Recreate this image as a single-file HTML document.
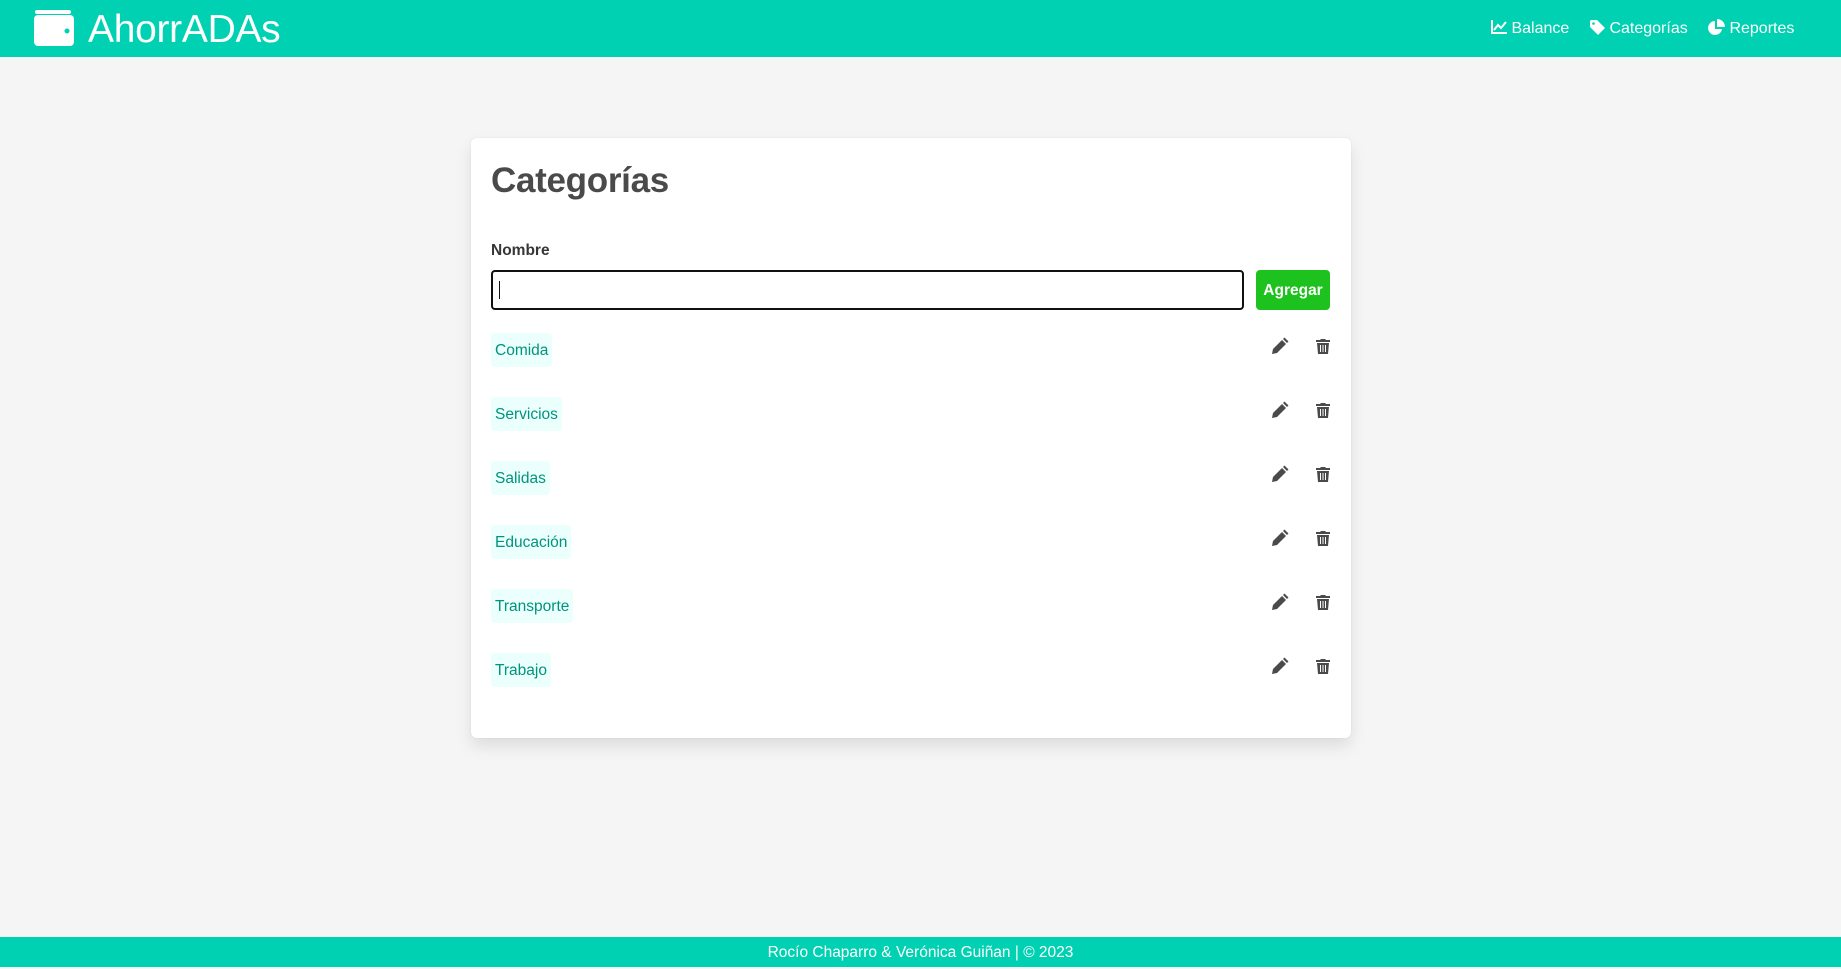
<!DOCTYPE html>
<html><head><meta charset="utf-8"><style>
*{box-sizing:border-box;margin:0;padding:0}
body{width:1841px;height:967px;background:#f5f5f5;font-family:"Liberation Sans",sans-serif;position:relative;overflow:hidden;color:#4a4a4a}
.nav{position:absolute;top:0;left:0;width:1841px;height:57px;background:#00d1b2;color:#fff}
.logo{position:absolute;left:88px;top:6px;font-size:39px;line-height:48px;letter-spacing:-0.3px}
.nav a{position:absolute;top:19px;font-size:16px;color:#fff;text-decoration:none;line-height:20px}
.card{position:absolute;left:471px;top:138px;width:880px;height:600px;background:#fff;border-radius:6px;box-shadow:0 8px 16px rgba(10,10,10,.1),0 0 0 1px rgba(10,10,10,.02)}
h1{position:absolute;left:20px;top:23px;font-size:35px;font-weight:bold;color:#4a4a4a;letter-spacing:-0.3px}
.lbl{position:absolute;left:20px;top:104px;font-size:15.5px;font-weight:bold;color:#363636}
.inp{position:absolute;left:20px;top:132px;width:753px;height:40px;border:2px solid #111;border-radius:4px}
.inp:after{content:"";position:absolute;left:6px;top:9px;width:1px;height:18px;background:#111}
.btn{position:absolute;left:785px;top:132px;width:74px;height:40px;background:#1ec21e;border-radius:4px;color:#fff;font-weight:bold;font-size:15.5px;text-align:center;line-height:41px}
.tag{position:absolute;left:20px;height:34px;line-height:36px;padding:0 4px;background:#ebfffc;color:#00947e;font-size:15.5px;border-radius:4px}
.foot{position:absolute;left:0;top:937px;width:1841px;height:30px;background:#00d1b2;color:#fff;text-align:center;font-size:15.5px;line-height:32px}
</style></head><body>
<div class="nav">
<svg style="position:absolute;left:34px;top:10px" width="40" height="36" viewBox="0 0 40 36"><rect x="1" y="0" width="36" height="4" rx="2" fill="#fff"/><rect x="0" y="5" width="40" height="31" rx="4" fill="#fff"/><circle cx="33" cy="21" r="2.5" fill="#00d1b2"/></svg>
<div class="logo">AhorrADAs</div>
<a style="left:1491px"><svg width="16" height="14" viewBox="0 0 16 14" style="vertical-align:-1px"><path d="M1 0v13h15" stroke="#fff" stroke-width="2" fill="none"/><path d="M3 10l4-5 3 3 5-6" stroke="#fff" stroke-width="2" fill="none"/></svg> Balance</a>
<a style="left:1590px"><svg width="15" height="15" viewBox="0 0 15 15" style="vertical-align:-2px"><path d="M0 1v6l8 8 7-7-8-8H1z" fill="#fff"/><circle cx="3.5" cy="3.5" r="1.3" fill="#00d1b2"/></svg> Categorías</a>
<a style="left:1708px"><svg width="17" height="17" viewBox="0 0 17 17" style="vertical-align:-3px"><path d="M7 2a7 7 0 1 0 7 8H7z" fill="#fff"/><path d="M9 0v8h8A8 8 0 0 0 9 0z" fill="#fff"/></svg> Reportes</a>
</div>
<div class="card">
<h1>Categorías</h1>
<div class="lbl">Nombre</div>
<div class="inp"></div>
<div class="btn">Agregar</div>
</div>
<div class="foot">Rocío Chaparro &amp; Verónica Guiñan | © 2023</div>
<div style="position:absolute;left:0;top:0">
<div class="tag" style="left:491px;top:333px">Comida</div>
<div class="tag" style="left:491px;top:397px">Servicios</div>
<div class="tag" style="left:491px;top:461px">Salidas</div>
<div class="tag" style="left:491px;top:525px">Educación</div>
<div class="tag" style="left:491px;top:589px">Transporte</div>
<div class="tag" style="left:491px;top:653px">Trabajo</div>
</div>
<svg style="position:absolute;left:0;top:0" width="1841" height="967">
<defs>
<g id="p"><path d="M0 16l1-5 9-9 4 4-9 9z" fill="#4a4a4a"/><path d="M11 1l1.5-1.5 4 4L15 5z" fill="#4a4a4a"/></g>
<g id="t"><rect x="0" y="1" width="14" height="2" fill="#4a4a4a"/><rect x="4.5" y="0" width="5" height="2" fill="#4a4a4a"/><path d="M1 4h12l-1 11H2z" fill="#4a4a4a"/><path d="M4.5 6v7M7 6v7M9.5 6v7" stroke="#fff" stroke-width="1"/></g>
</defs>
<use href="#p" x="1272" y="338"/><use href="#t" x="1316" y="339"/>
<use href="#p" x="1272" y="402"/><use href="#t" x="1316" y="403"/>
<use href="#p" x="1272" y="466"/><use href="#t" x="1316" y="467"/>
<use href="#p" x="1272" y="530"/><use href="#t" x="1316" y="531"/>
<use href="#p" x="1272" y="594"/><use href="#t" x="1316" y="595"/>
<use href="#p" x="1272" y="658"/><use href="#t" x="1316" y="659"/>
</svg>
</body></html>
